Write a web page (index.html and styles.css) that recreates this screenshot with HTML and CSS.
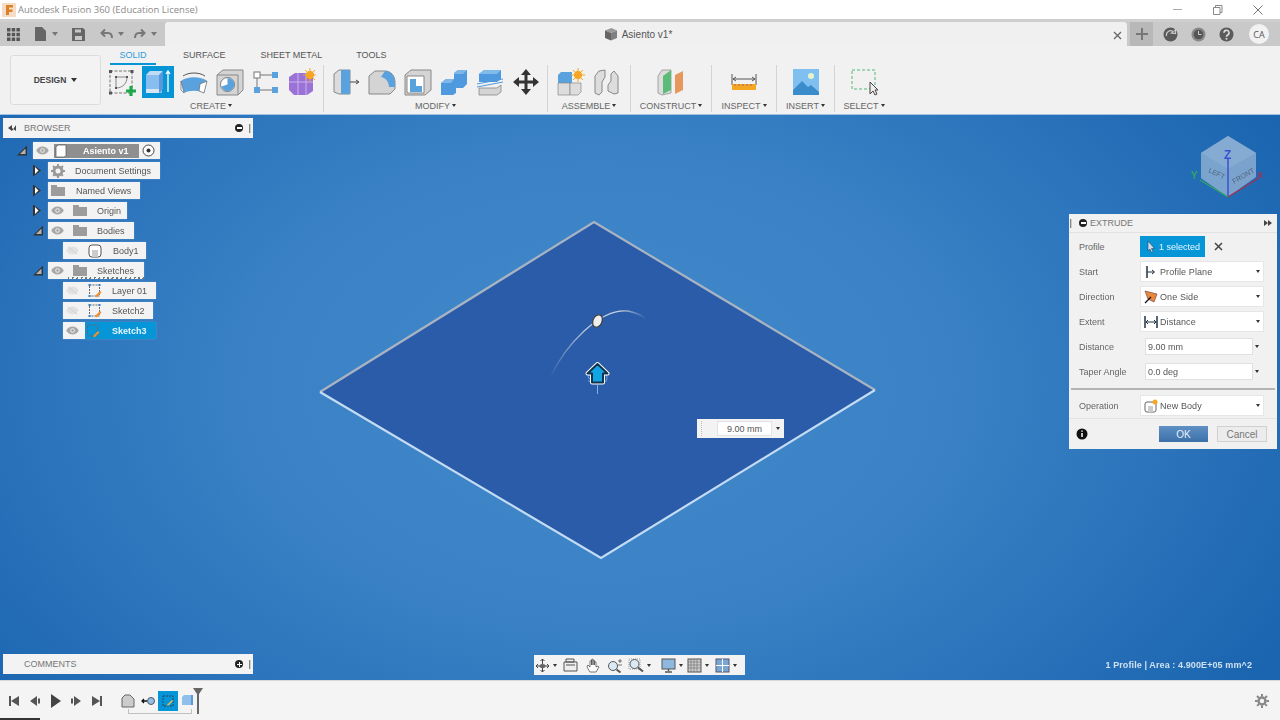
FILE: index.html
```html
<!DOCTYPE html>
<html lang="en">
<head>
<meta charset="utf-8">
<title>Autodesk Fusion 360 (Education License)</title>
<link rel="stylesheet" href="styles.css">
</head>
<body>
<div class="app">
  <header class="titlebar">
    <svg class="applogo" viewBox="0 0 14 14"><rect width="14" height="14" fill="#f6dcc4"/><path d="M4 2h7v2.500H7v2h3.500V9H7v3H4z" fill="#d9822b"/></svg>
    <span class="apptitle">Autodesk Fusion 360 (Education License)</span>
    <div class="winctl">
      <svg width="12" height="12" viewBox="0 0 12 12"><path d="M1 5.500h9" stroke="#aaa" fill="none"/></svg>
      <svg width="12" height="12" viewBox="0 0 12 12"><path d="M1.500 3.500h6.500v7H1.500zM3.500 3.500v-2h6.500v7H8" stroke="#888" fill="none"/></svg>
      <svg width="12" height="12" viewBox="0 0 12 12"><path d="M1.500 1.500l9 9M10.500 1.500l-9 9" stroke="#777" fill="none"/></svg>
    </div>
  </header>

  <nav class="tabbar">
    <div class="qat">
      <svg width="13" height="13" viewBox="0 0 13 13" fill="#555"><path d="M0 0h3.500v3.500H0zM4.700 0h3.500v3.500H4.700zM9.400 0h3.500v3.500H9.400zM0 4.700h3.500v3.500H0zM4.700 4.700h3.500v3.500H4.700zM9.400 4.700h3.500v3.500H9.400zM0 9.400h3.500v3.500H0zM4.700 9.400h3.500v3.500H4.700zM9.400 9.400h3.500v3.500H9.400z"/></svg>
      <span class="qat-pair file"><svg width="12" height="14" viewBox="0 0 12 14" fill="#666"><path d="M0 0h7l4 4v10H0z"/></svg><i class="caret"></i></span>
      <svg class="save" width="13" height="13" viewBox="0 0 13 13"><path fill="#666" d="M0 0h11l2 2v11H0z"/><path fill="#c8c8c8" d="M3 1.500h6v3H3zM3 8h7v4H3z"/></svg>
      <span class="qat-pair undo"><svg width="13" height="12" viewBox="0 0 13 12"><path d="M5 1.500L1.500 5 5 8.500M2 5h6c3 0 4 2 4 5" stroke="#777" stroke-width="2" fill="none"/></svg><i class="caret"></i></span>
      <span class="qat-pair redo"><svg width="13" height="12" viewBox="0 0 13 12"><path d="M8 1.500L11.500 5 8 8.500M11 5H6c-3 0-4 2-4 5" stroke="#777" stroke-width="2" fill="none"/></svg><i class="caret"></i></span>
    </div>
    <div class="doctab">
      <div class="doctab-title">
        <svg width="14" height="14" viewBox="0 0 14 14"><path d="M1 3.500L7.500 1l5.500 2.500-6 2.500z" fill="#9a9a9a"/><path d="M1 3.500L7 6v7.500l-6-2.500z" fill="#666"/><path d="M13 3.500L7 6v7.500l6-2.500z" fill="#808080"/></svg>
        <span>Asiento v1*</span>
      </div>
      <svg class="tabclose" width="9" height="9" viewBox="0 0 9 9"><path d="M1 1l7 7M8 1L1 8" stroke="#666" stroke-width="1.300"/></svg>
    </div>
    <div class="plus"><svg width="12" height="12" viewBox="0 0 12 12"><path d="M6 0v12M0 6h12" stroke="#777" stroke-width="2"/></svg></div>
    <div class="tabicons">
      <svg width="15" height="15" viewBox="0 0 15 15"><circle cx="7.500" cy="7.500" r="7" fill="#5a5a5a"/><path d="M3.500 9a4.200 4.200 0 0 1 6.700-4.300L8.500 6l4 .5V2.500L11.200 4" stroke="#c8c8c8" stroke-width="1.200" fill="none"/></svg>
      <svg width="15" height="15" viewBox="0 0 15 15"><circle cx="7.500" cy="7.500" r="7" fill="#888"/><circle cx="7.500" cy="7.500" r="4.800" fill="#555"/><path d="M7.500 4v3.500h3" stroke="#ccc" fill="none"/></svg>
      <svg width="15" height="15" viewBox="0 0 15 15"><circle cx="7.500" cy="7.500" r="7" fill="#5a5a5a"/><path d="M5 5.800a2.500 2.500 0 1 1 3.700 2.200c-.8.500-1.200.8-1.200 1.800" stroke="#ddd" stroke-width="1.600" fill="none"/><circle cx="7.500" cy="11.800" r="1" fill="#ddd"/></svg>
      <span class="avatar">CA</span>
    </div>
  </nav>

  <section class="ribbon">
    <button class="design">DESIGN<i class="caret dark"></i></button>
    <div class="ribbon-main">
      <div class="tabs">
        <span class="tab active">SOLID</span>
        <span class="tab surface">SURFACE</span>
        <span class="tab sheet">SHEET METAL</span>
        <span class="tab tools">TOOLS</span>
      </div>
      <div class="groups">
        <div class="group g-create">
          <div class="icons">
            <svg class="ic" viewBox="0 0 28 28"><rect x="2" y="3" width="22" height="22" fill="none" stroke="#777" stroke-dasharray="3 1.500"/><path d="M1 2h3v3H1zM22.500 2h3v3h-3zM1 23.500h3v3H1z" fill="#555"/><path d="M8 9h11c0 6-4 11-11 11z" fill="none" stroke="#888"/><path d="M7 8h2v2H7zM18 8h2v2h-2zM7 19h2v2H7z" fill="#555"/><path d="M18 23h10M23 18v10" stroke="#1ea84c" stroke-width="3.200"/></svg>
            <span class="active-ic"><svg class="ic" viewBox="0 0 28 28"><path d="M2 7l4-4h12v22H2z" fill="#88bdf0"/><path d="M6 3h13l-4 4H2z" fill="#bfdcf6"/><path d="M15 7l4-4v18l-4 4z" fill="#5a99d8"/><path d="M2 21h13v4H2z" fill="#d7e6f2"/><path d="M24 24V3M22 6l2-3 2 3" stroke="#fff" fill="none" stroke-width="1.300"/></svg></span>
            <svg class="ic" viewBox="0 0 28 28"><path d="M1 13c6-5 20-5 26 0l-3 12c-5-3-15-3-20 0z" fill="#5aa2de"/><path d="M1 13l3 12-3-3zM20 16l7-3-3 12-5-2z" fill="#fff" stroke="#666" stroke-width=".7"/><path d="M3 8c6-4 16-4 22 0" stroke="#555" fill="none"/></svg>
            <svg class="ic" viewBox="0 0 28 28"><path d="M1 7l6-5h20v20l-5 5H1z" fill="#d4d4d4" stroke="#888"/><path d="M1 7h21v20" fill="none" stroke="#888"/><circle cx="11.500" cy="16.500" r="7" fill="#fff" stroke="#777"/><path d="M11.500 10a6.500 6.500 0 1 1-6 8.500l6-2z" fill="#5aa2de"/></svg>
            <svg class="ic" viewBox="0 0 28 28"><rect x="2" y="4" width="6" height="6" fill="#fff" stroke="#777"/><rect x="20" y="4" width="6" height="6" fill="#5aa2de"/><rect x="2" y="19" width="6" height="6" fill="#5aa2de"/><rect x="20" y="19" width="6" height="6" fill="#5aa2de"/><path d="M8 7h12M8 22h12M5 10v9" stroke="#777"/></svg>
            <svg class="ic" viewBox="0 0 28 28"><path d="M1 9l6-4h13l5 5v13l-6 4H6l-5-5z" fill="#9b72d8"/><path d="M1 14h24M10 5v22M18 5v22" stroke="#c9b3ec"/><circle cx="22" cy="7" r="4" fill="#f5a623"/><path d="M22 0v14M15 7h14M17 2l10 10M27 2L17 12" stroke="#f5a623"/></svg>
          </div>
          <span class="glabel create-label">CREATE<i class="caret dark"></i></span>
        </div>
        <div class="group g-modify">
          <div class="icons">
            <svg class="ic" viewBox="0 0 28 28"><path d="M2 6l5-4h11v24H7l-5-2z" fill="#dcdcdc" stroke="#888"/><path d="M9 2h9v24H9z" fill="#5aa2de"/><path d="M18 14h8M24 12l3 2-3 2" stroke="#444" fill="none"/></svg>
            <svg class="ic" viewBox="0 0 28 28"><path d="M1 8l6-5h10c6 0 10 5 10 11v7l-5 5H1z" fill="#d4d4d4" stroke="#888"/><path d="M17 3c6 0 10 5 10 11v5h-6c0-5-3-9-8-10z" fill="#5aa2de"/></svg>
            <svg class="ic" viewBox="0 0 28 28"><path d="M1 7l6-5h20v20l-6 5H1z" fill="#d4d4d4" stroke="#888"/><path d="M3 8h17v17H3z" fill="#fff" stroke="#888"/><path d="M6 11h6v7h6v6H6z" fill="#5aa2de"/></svg>
            <svg class="ic" viewBox="0 0 28 28"><path d="M1 15l5-4h8V5l4-3h9v14l-4 4h-7v5l-3 2H1z" fill="#4f9ade"/><path d="M14 5l4-3h9l-4 4H14zM1 15l5-4h8l-3 4z" fill="#7fb8e8"/></svg>
            <svg class="ic" viewBox="0 0 28 28"><path d="M3 6l5-4h17v9l-4 3H3z" fill="#4f9ade"/><path d="M3 6l5-4h17l-4 4z" fill="#80bcea"/><path d="M1 16l26-5M1 19l26-5" stroke="#4f9ade"/><path d="M3 20h18l4-3v7l-4 3H3z" fill="#d4d4d4" stroke="#888" stroke-width=".8"/></svg>
            <svg class="ic" viewBox="0 0 28 28"><path d="M14 1l5 6h-3.500v5.500H21V9l6 5-6 5v-3.500h-5.500V21H19l-5 6-5-6h3.500v-5.500H7V19l-6-5 6-5v3.500h5.500V7H9z" fill="#333"/></svg>
          </div>
          <span class="glabel">MODIFY<i class="caret dark"></i></span>
        </div>
        <div class="group g-assemble">
          <div class="icons">
            <svg class="ic" viewBox="0 0 28 28"><path d="M1 7l3-3h11v11H1z" fill="#5aa2de"/><path d="M1 15h12v12H1z" fill="#ddd" stroke="#888" stroke-width=".7"/><path d="M13 15h11v9l-3 3h-8z" fill="#ddd" stroke="#888" stroke-width=".7"/><circle cx="21" cy="7" r="4" fill="#f5a623"/><path d="M21 0v14M14 7h14M16 2l10 10M26 2L16 12" stroke="#f5a623"/></svg>
            <svg class="ic" viewBox="0 0 28 28"><path d="M2 25V8l4-5 6-1v7l-3 5v10l-3 3z" fill="#ddd" stroke="#888"/><path d="M25 25V8l-4-5-3 3v7l-3 4v6l6 3z" fill="#ddd" stroke="#888"/></svg>
          </div>
          <span class="glabel">ASSEMBLE<i class="caret dark"></i></span>
        </div>
        <div class="group g-construct">
          <div class="icons">
            <svg class="ic" viewBox="0 0 28 28"><path d="M1 8l4-6h9v23l-9 2-4-2z" fill="#ddd" stroke="#888" stroke-width=".7"/><path d="M6 8l8-6v20l-8 4z" fill="#5dbb78"/><path d="M18 7l8-4v19l-8 4z" fill="#e8975c"/></svg>
          </div>
          <span class="glabel">CONSTRUCT<i class="caret dark"></i></span>
        </div>
        <div class="group g-inspect">
          <div class="icons">
            <svg class="ic" viewBox="0 0 28 28"><path d="M2 6v11M26 6v11M3 11h22M6 9l-3 2 3 2M22 9l3 2-3 2" stroke="#555" fill="none"/><rect x="2" y="16" width="24" height="6" fill="#f5a623"/><path d="M5 16v2M9 16v2M13 16v2M17 16v2M21 16v2" stroke="#a66"/></svg>
          </div>
          <span class="glabel">INSPECT<i class="caret dark"></i></span>
        </div>
        <div class="group g-insert">
          <div class="icons">
            <svg class="ic" viewBox="0 0 28 28"><rect x="1" y="1" width="26" height="26" fill="#7fc0f0"/><circle cx="19" cy="8" r="3" fill="#e8f4c8"/><path d="M1 22l9-9 6 6 3-2 8 7v3H1z" fill="#3a8ccb"/></svg>
          </div>
          <span class="glabel">INSERT<i class="caret dark"></i></span>
        </div>
        <div class="group g-select">
          <div class="icons">
            <svg class="ic" viewBox="0 0 28 28"><rect x="2" y="2" width="23" height="19" fill="none" stroke="#55b878" stroke-dasharray="3 2"/><path d="M20 14v12l3-3 2 4 2-1-2-4h3z" fill="#eee" stroke="#444"/></svg>
          </div>
          <span class="glabel">SELECT<i class="caret dark"></i></span>
        </div>
      </div>
    </div>
  </section>

  <main class="viewport">
    <svg class="scene" width="1280" height="566" viewBox="0 114 1280 566">
      <defs>
        <linearGradient id="arcfade" gradientUnits="userSpaceOnUse" x1="550" y1="378" x2="645" y2="318">
          <stop offset="0" stop-color="#c9d3de" stop-opacity="0"/>
          <stop offset=".5" stop-color="#c9d3de" stop-opacity=".9"/>
          <stop offset=".85" stop-color="#c9d3de"/>
          <stop offset="1" stop-color="#c9d3de" stop-opacity=".1"/>
        </linearGradient>
      </defs>
      <polygon points="594,222 875,390 601,558 320,392" fill="#2b5ca9"/>
      <path d="M320 392L594 222 875 390" fill="none" stroke="#a9b4c2" stroke-width="2.200"/>
      <path d="M320 392L601 558 875 390" fill="none" stroke="#c4dcf3" stroke-width="2.200"/>
      <path d="M550 378C565 345 600 308 628 311Q638 313 645 318" fill="none" stroke="url(#arcfade)" stroke-width="1.300"/>
      <ellipse cx="597.500" cy="321" rx="4.500" ry="6.500" transform="rotate(25 597.500 321)" fill="#eee" stroke="#444" stroke-width="1.300"/>
      <text class="ghost" x="597.500" y="382" text-anchor="middle">9.00</text>
      <path d="M597.500 385v9" stroke="#7fb4e8"/>
      <path d="M597.500 364l10 9.500h-4.500v9h-11v-9h-4.500z" fill="none" stroke="#fff" stroke-width="4" stroke-linejoin="round"/>
      <path d="M597.500 364l10 9.500h-4.500v9h-11v-9h-4.500z" fill="#12a5e3" stroke="#14324d" stroke-width="2" stroke-linejoin="round"/>
    </svg>

    <svg class="viewcube" width="90" height="80" viewBox="0 0 90 80">
      <path d="M44 10l28 17v24L44 71 17 52V27z" fill="#7aa2cc"/>
      <path d="M44 10l28 17-28 16-27-16z" fill="#86abd2"/>
      <path d="M17 27l27 16v28L17 52z" fill="#7aa3cd"/>
      <path d="M44 33v38" stroke="#3b4fd0" stroke-width="1.500"/>
      <path d="M44 71L16 54" stroke="#2fa860" stroke-width="1.200"/>
      <path d="M44 71l31-19" stroke="#a83050" stroke-width="1.200"/>
      <text x="40" y="33" class="cube-z">Z</text>
      <text x="7" y="53" class="cube-y">Y</text>
      <text x="73" y="52" class="cube-x">X</text>
      <text x="24" y="46" class="cube-t" transform="rotate(25 24 46)">LEFT</text>
      <text x="50" y="58" class="cube-t" transform="rotate(-30 50 58)">FRONT</text>
    </svg>

    <div class="panel browser-head">
      <i class="dbl left"></i><span class="ptitle">BROWSER</span>
      <span class="pctl"><i class="minus"></i><i class="grip"></i></span>
    </div>

    <div class="tree">
      <div class="row lvl0">
        <i class="tw open"></i>
        <div class="node root">
          <svg class="eye" viewBox="0 0 14 10"><use href="#eye"/></svg>
          <span class="rootlabel"><svg width="14" height="14" viewBox="0 0 14 14"><path d="M2 3l2-2h8v11l-2 1H2z" fill="#fff" stroke="#555" stroke-width=".7"/></svg><b>Asiento v1</b></span>
          <svg class="radio" width="13" height="13" viewBox="0 0 13 13"><circle cx="6.500" cy="6.500" r="5.500" fill="#fff" stroke="#444"/><circle cx="6.500" cy="6.500" r="2" fill="#333"/></svg>
        </div>
      </div>
      <div class="row lvl1">
        <i class="tw closed"></i>
        <div class="node docset">
          <svg class="gear" width="14" height="14" viewBox="0 0 14 14"><circle cx="7" cy="7" r="4" fill="none" stroke="#999" stroke-width="3"/><path d="M7 0v14M0 7h14M2 2l10 10M12 2L2 12" stroke="#999" stroke-width="2" stroke-dasharray="2.500 9 2.500"/></svg>
          <span class="lbl">Document Settings</span>
        </div>
      </div>
      <div class="row lvl1">
        <i class="tw closed"></i>
        <div class="node named">
          <svg class="folder" viewBox="0 0 14 11"><use href="#folder"/></svg>
          <span class="lbl">Named Views</span>
        </div>
      </div>
      <div class="row lvl1">
        <i class="tw closed"></i>
        <div class="node origin">
          <svg class="eye" viewBox="0 0 14 10"><use href="#eye"/></svg>
          <svg class="folder" viewBox="0 0 14 11"><use href="#folder"/></svg>
          <span class="lbl">Origin</span>
        </div>
      </div>
      <div class="row lvl1">
        <i class="tw open"></i>
        <div class="node bodies">
          <svg class="eye" viewBox="0 0 14 10"><use href="#eye"/></svg>
          <svg class="folder" viewBox="0 0 14 11"><use href="#folder"/></svg>
          <span class="lbl">Bodies</span>
        </div>
      </div>
      <div class="row lvl2">
        <div class="node body1">
          <svg class="eye off" viewBox="0 0 14 10"><use href="#eyeoff"/></svg>
          <svg class="leaf" viewBox="0 0 14 14"><rect x="1" y="1" width="12" height="12" rx="3" fill="#fff" stroke="#555"/><rect x="4" y="6" width="6" height="7" fill="#ccc"/></svg>
          <span class="lbl">Body1</span>
        </div>
      </div>
      <div class="row lvl1">
        <i class="tw open"></i>
        <div class="node sketches">
          <svg class="eye" viewBox="0 0 14 10"><use href="#eye"/></svg>
          <svg class="folder" viewBox="0 0 14 11"><use href="#folder"/></svg>
          <span class="lbl">Sketches</span>
        </div>
      </div>
      <div class="row lvl2">
        <div class="node layer">
          <svg class="eye off" viewBox="0 0 14 10"><use href="#eyeoff"/></svg>
          <svg class="leaf" viewBox="0 0 14 14"><use href="#sk"/></svg>
          <span class="lbl">Layer 01</span>
        </div>
      </div>
      <div class="row lvl2">
        <div class="node sk2">
          <svg class="eye off" viewBox="0 0 14 10"><use href="#eyeoff"/></svg>
          <svg class="leaf" viewBox="0 0 14 14"><use href="#sk"/></svg>
          <span class="lbl">Sketch2</span>
        </div>
      </div>
      <div class="row lvl2">
        <div class="node sk3">
          <svg class="eye" viewBox="0 0 14 10"><use href="#eye"/></svg>
          <span class="selected"><svg class="leaf" viewBox="0 0 14 14"><use href="#sk"/></svg><b>Sketch3</b></span>
        </div>
      </div>
    </div>

    <div class="dimbox">
      <i class="dimgrip"></i>
      <span class="diminput">9.00 mm</span>
      <i class="caret dark"></i>
    </div>

    <aside class="extrude">
      <div class="ex-head">
        <i class="grip"></i><i class="minus"></i><span class="ptitle">EXTRUDE</span><i class="dbl right"></i>
      </div>
      <div class="ex-body">
        <div class="ex-row"><label>Profile</label>
          <div class="sel1"><svg width="8" height="12" viewBox="0 0 8 12"><path d="M1 0v10l2-2 1.500 3.500 1.500-.7L4.500 7.500H7.500z" fill="#cde" stroke="#234" stroke-width=".5"/></svg><span>1 selected</span></div>
          <svg class="clear" width="9" height="9" viewBox="0 0 9 9"><path d="M1 1l7 7M8 1L1 8" stroke="#444" stroke-width="1.500"/></svg>
        </div>
        <div class="ex-row"><label>Start</label>
          <div class="combo"><svg width="14" height="14" viewBox="0 0 14 14"><path d="M3 1v12" stroke="#234" stroke-width="1.500"/><path d="M3 7h7M8 5l2.500 2L8 9" stroke="#234" fill="none"/></svg><span>Profile Plane</span><i class="caret dark"></i></div>
        </div>
        <div class="ex-row"><label>Direction</label>
          <div class="combo"><svg width="14" height="14" viewBox="0 0 14 14"><path d="M1 1l12 3-3 8-6-3z" fill="#e8883c" stroke="#633" stroke-width=".6"/><path d="M1 13l6-6" stroke="#111" stroke-width="1.300"/></svg><span>One Side</span><i class="caret dark"></i></div>
        </div>
        <div class="ex-row"><label>Extent</label>
          <div class="combo"><svg width="14" height="14" viewBox="0 0 14 14"><path d="M1 1v12M13 1v12" stroke="#234" stroke-width="1.500"/><path d="M2 7h10M4 5L2 7l2 2M10 5l2 2-2 2" stroke="#234" fill="none"/></svg><span>Distance</span><i class="caret dark"></i></div>
        </div>
        <div class="ex-row"><label>Distance</label>
          <div class="input">9.00 mm</div><i class="caret dark"></i>
        </div>
        <div class="ex-row"><label>Taper Angle</label>
          <div class="input">0.0 deg</div><i class="caret dark"></i>
        </div>
        <hr class="ex-sep">
        <div class="ex-row"><label>Operation</label>
          <div class="combo"><svg width="14" height="14" viewBox="0 0 14 14"><rect x="1" y="3" width="11" height="10" rx="2" fill="#fff" stroke="#666"/><rect x="4" y="7" width="5" height="6" fill="#ccc"/><circle cx="11" cy="3" r="2.500" fill="#f5a623"/></svg><span>New Body</span><i class="caret dark"></i></div>
        </div>
      </div>
      <div class="ex-foot">
        <svg class="info" width="12" height="12" viewBox="0 0 12 12"><circle cx="6" cy="6" r="5.500" fill="#111"/><path d="M6 5v4M6 2.500v1.300" stroke="#fff" stroke-width="1.500"/></svg>
        <button class="ok">OK</button>
        <button class="cancel">Cancel</button>
      </div>
    </aside>

    <div class="panel comments-head">
      <span class="ptitle">COMMENTS</span>
      <span class="pctl"><i class="plusdot"></i><i class="grip"></i></span>
    </div>

    <div class="navbar">
      <span class="nv w"><svg width="15" height="15" viewBox="0 0 15 15"><path d="M7.500 1v13M1 8h13M5.500 3l2-2 2 2M5.500 12l2 2 2-2M3 6L1 8l2 2M12 6l2 2-2 2" stroke="#444" fill="none"/><ellipse cx="7.500" cy="8" rx="3" ry="2" fill="#666"/></svg><i class="caret dark"></i></span>
      <span class="nv"><svg width="15" height="14" viewBox="0 0 15 14"><path d="M1 4h13v9H1zM3 1h8v3H3z" fill="#eee" stroke="#555"/><path d="M3 7h9" stroke="#555"/></svg></span>
      <span class="nv hand"><svg width="15" height="15" viewBox="0 0 15 15"><path d="M4 14c-2-3-3-5-3-6l1-1 2 2V3l1.500-.5V7V1.500L7 1v6V2l1.500.5V7 3.500L10 4v5l2-1 1 1-3 5z" fill="#fff" stroke="#555" stroke-width=".8"/></svg></span>
      <span class="nv"><svg width="15" height="15" viewBox="0 0 15 15"><circle cx="6" cy="8" r="4.500" fill="#dbe9f5" stroke="#555"/><path d="M9.500 11.500l4 3" stroke="#555" stroke-width="2"/><path d="M11 3h4M13 1v4M11 7h4" stroke="#555" stroke-width=".8"/></svg></span>
      <span class="nv w"><svg width="16" height="15" viewBox="0 0 16 15"><rect x="1" y="1" width="11" height="10" fill="none" stroke="#999" stroke-dasharray="1 1"/><circle cx="6.500" cy="6" r="4.500" fill="#dbe9f5" stroke="#555"/><path d="M10 9.500l5 4" stroke="#555" stroke-width="2"/></svg><i class="caret dark"></i></span>
      <span class="nv w gap"><svg width="15" height="15" viewBox="0 0 15 15"><rect x="1" y="1" width="13" height="10" fill="#8fb8de" stroke="#555"/><path d="M7.500 11v2M4 14h7" stroke="#555" stroke-width="1.500"/></svg><i class="caret dark"></i></span>
      <span class="nv w tight"><svg width="15" height="15" viewBox="0 0 15 15"><rect x="1" y="1" width="13" height="13" fill="#ccc" stroke="#555"/><path d="M4 1v13M7 1v13M10 1v13M1 4h13M1 7h13M1 10h13" stroke="#777" stroke-width=".7"/></svg><i class="caret dark"></i></span>
      <span class="nv w"><svg width="15" height="15" viewBox="0 0 15 15"><rect x="1" y="1" width="13" height="13" fill="#7aa7d2" stroke="#557"/><path d="M7.500 1v13M1 7.500h13" stroke="#fff"/></svg><i class="caret dark"></i></span>
    </div>

    <div class="status">1 Profile | Area : 4.900E+05 mm^2</div>
  </main>

  <footer class="timeline">
    <div class="controls">
      <svg width="12" height="12" viewBox="0 0 12 12"><path d="M1 1h2v10H1zM11 1v10L3 6z" fill="#555"/></svg>
      <svg width="12" height="12" viewBox="0 0 12 12"><path d="M8 1v10L1 6zM9 3.500h2v5H9z" fill="#555"/></svg>
      <svg width="12" height="14" viewBox="0 0 12 14"><path d="M1 0v14l10-7z" fill="#444"/></svg>
      <svg width="12" height="12" viewBox="0 0 12 12"><path d="M4 1v10l7-5zM1 3.500h2v5H1z" fill="#555"/></svg>
      <svg width="12" height="12" viewBox="0 0 12 12"><path d="M1 1v10l8-5zM9 1h2v10H9z" fill="#555"/></svg>
    </div>
    <div class="tl-items">
      <svg width="14" height="14" viewBox="0 0 14 14"><path d="M1 4l3-3h5l4 4v8H1z" fill="#ccc" stroke="#666"/></svg>
      <svg class="tl-joint" width="14" height="10" viewBox="0 0 14 10"><circle cx="10" cy="5" r="3.500" fill="#8fc0ec" stroke="#555"/><path d="M6 5H1M3 3L1 5l2 2" stroke="#111" fill="none" stroke-width="1.300"/></svg>
      <span class="tl-active"><svg width="14" height="14" viewBox="0 0 14 14"><path d="M2 2h10v10H2z" fill="none" stroke="#246" stroke-dasharray="2 1"/><path d="M6 11l5-5 1 1-5 5z" fill="#f0c040"/></svg></span>
      <svg width="13" height="13" viewBox="0 0 13 13"><path d="M1 3l2-2h8v10H1z" fill="#8fc0ec"/><path d="M10 1h2v10h-2z" fill="#5a9ad8"/></svg>
      <svg class="marker" width="10" height="26" viewBox="0 0 10 26"><path d="M0 0h10L6 6v20H4V6z" fill="#666"/></svg>
      <i class="tl-bracket"></i>
    </div>
    <svg class="settings" width="14" height="14" viewBox="0 0 14 14"><circle cx="7" cy="7" r="3.500" fill="none" stroke="#888" stroke-width="2.500"/><path d="M7 0v14M0 7h14M2 2l10 10M12 2L2 12" stroke="#888" stroke-width="2" stroke-dasharray="2.500 9 2.500"/></svg>
    <i class="taskline"></i>
  </footer>
</div>

<svg class="defs" width="0" height="0">
  <defs>
    <g id="eye"><path d="M0 5c3-6 11-6 14 0-3 6-11 6-14 0z" fill="#a8a8a8"/><circle cx="7" cy="5" r="2.500" fill="#ececec"/><circle cx="7" cy="5" r="1.300" fill="#999"/></g>
    <g id="eyeoff"><path d="M0 5c3-6 11-6 14 0-3 6-11 6-14 0z" fill="#e2e2e2"/><path d="M2 1l10 8" stroke="#ccc"/></g>
    <g id="folder"><path d="M0 0h6v2h8v9H0z" fill="#9c9c9c"/></g>
    <g id="sk"><rect x="1.500" y="1" width="10" height="11" fill="none" stroke="#666" stroke-dasharray="2 1"/><rect x="0.500" y="0" width="2" height="2" fill="#2f80d0"/><rect x="10.500" y="0" width="2" height="2" fill="#2f80d0"/><rect x="0.500" y="11" width="2" height="2" fill="#2f80d0"/><path d="M7 12l5-5 1.500 1.500-5 5z" fill="#f09030"/></g>
  </defs>
</svg>
</body>
</html>
```

FILE: styles.css
```css
* { box-sizing: border-box; }
html, body { margin: 0; padding: 0; }
body { width: 1280px; height: 720px; overflow: hidden; font-family: "Liberation Sans", Arial, sans-serif; color: #555; background: #fff; }
i { display: block; font-style: normal; }
b { font-weight: bold; }
button { font-family: inherit; }
.defs { position: absolute; }

.app { display: flex; flex-direction: column; width: 1280px; height: 720px; filter: blur(.35px); }

.caret { width: 0; height: 0; border-left: 3px solid transparent; border-right: 3px solid transparent; border-top: 4px solid #777; flex: none; }
.caret.dark { border-top-color: #333; }

/* title */
.titlebar { height: 19px; flex: none; display: flex; align-items: center; padding-left: 2px; background: #fff; }
.applogo { width: 14px; height: 14px; flex: none; }
.apptitle { font: 9.500px "Open Sans", sans-serif; color: #8a8a8a; margin-left: 2px; }
.winctl { margin-left: auto; display: flex; gap: 28px; padding-right: 16px; }

/* tab bar */
.tabbar { height: 27px; flex: none; display: flex; background: #c9c9c9; border-top: 3px solid #cfcfcf; }
.qat { width: 165px; display: flex; align-items: center; padding-left: 7px; flex: none; }
.qat-pair { display: flex; align-items: center; gap: 5px; }
.file { margin-left: 15px; }
.save { margin-left: 14px; }
.undo { margin-left: 15px; }
.redo { margin-left: 9px; }
.doctab { width: 962px; background: #f0f0f0; display: flex; align-items: center; justify-content: center; position: relative; border-radius: 3px 3px 0 0; padding-right: 16px; }
.doctab-title { display: flex; align-items: center; gap: 4px; font-size: 10px; color: #555; }
.tabclose { position: absolute; right: 5px; top: 9px; }
.plus { width: 23px; background: #b8b8b8; display: flex; align-items: center; justify-content: center; margin-left: 3px; }
.tabicons { flex: 1; display: flex; align-items: center; gap: 13px; padding-left: 10px; }
.avatar { width: 20px; height: 20px; border-radius: 50%; background: #f2f2f2; font: 9px "Open Sans", sans-serif; color: #555; display: flex; align-items: center; justify-content: center; margin-left: 2px; }

/* ribbon */
.ribbon { height: 68px; flex: none; background: #f1f1f1; display: flex; position: relative; }
.design { width: 91px; height: 50px; margin: 9px 0 0 10px; border: 1px solid #dcdcdc; border-radius: 3px; background: #f3f3f3; font-size: 8.500px; font-weight: bold; color: #444; display: flex; align-items: center; justify-content: center; gap: 5px; padding: 0; flex: none; }
.ribbon-main { margin-left: 8px; flex: 1; display: flex; flex-direction: column; }
.tabs { height: 19px; display: flex; align-items: flex-end; font-size: 9px; color: #555; }
.tab { line-height: 13px; }
.tab.active { width: 46px; text-align: center; color: #2f9bd8; border-bottom: 2px solid #0696d7; height: 19px; padding-top: 3px; margin-left: 1px; }
.surface { margin-left: 27px; position: relative; top: -3px; }
.sheet { margin-left: 35px; position: relative; top: -3px; }
.tools { margin-left: 34px; position: relative; top: -3px; }
.groups { display: flex; height: 49px; }
.group { display: flex; flex-direction: column; align-items: center; border-right: 1px solid #d4d4d4; height: 47px; }
.g-create { width: 215px; }
.g-modify { width: 224px; }
.g-assemble { width: 83px; }
.g-construct { width: 81px; }
.g-inspect { width: 65px; }
.g-insert { width: 58px; }
.g-select { width: 58px; border-right: 0; }
.icons { height: 34px; display: flex; align-items: center; justify-content: center; }
.g-create .icons { gap: 8px; margin-left: -8px; }
.g-modify .icons { gap: 8px; }
.g-assemble .icons { gap: 8px; }
.ic { width: 28px; height: 28px; display: block; flex: none; }
.active-ic { width: 32px; height: 32px; background: #0696d7; display: flex; align-items: center; justify-content: center; margin: 0 -2px; }
.glabel { font-size: 9px; color: #666; display: flex; align-items: center; gap: 2px; height: 13px; }
.create-label { margin-left: -10px; }
.glabel .caret { border-left-width: 2.500px; border-right-width: 2.500px; border-top-width: 3px; }

/* viewport */
.viewport { flex: 1; position: relative; overflow: hidden; background: radial-gradient(ellipse 780px 520px at 600px 270px, #4289cb 0%, #3a82c5 45%, #2a72ba 75%, #1b65b0 100%); border-top: 1px solid #9fc3e4; }
.scene { position: absolute; left: 0; top: -1px; }
.ghost { font: 10.500px "Liberation Sans", sans-serif; fill: #6ba3e0; }
.viewcube { position: absolute; left: 1184px; top: 11px; }
.cube-z { font: bold 12px "Liberation Sans", sans-serif; fill: #3b4fd0; }
.cube-y { font: bold 10px "Liberation Sans", sans-serif; fill: #2fa860; }
.cube-x { font: bold 9px "Liberation Sans", sans-serif; fill: #a83050; }
.cube-t { font: 7px "Liberation Sans", sans-serif; fill: #50667e; }

.panel { position: absolute; left: 3px; width: 250px; display: flex; align-items: center; background: #f3f3f3; }
.browser-head { top: 3px; height: 20px; padding-left: 5px; }
.comments-head { top: 539px; height: 20px; padding-left: 21px; }
.ptitle { font-size: 9px; color: #777; }
.browser-head .ptitle { margin-left: 8px; }
.pctl { margin-left: auto; display: flex; align-items: center; gap: 6px; padding-right: 2px; }
.minus { width: 8px; height: 8px; border-radius: 50%; background: #222; position: relative; }
.minus::after { content: ""; position: absolute; left: 1.500px; right: 1.500px; top: 3px; height: 2px; background: #fff; }
.plusdot { width: 8px; height: 8px; border-radius: 50%; background-color: #222; background-image: linear-gradient(#fff, #fff), linear-gradient(#fff, #fff); background-size: 5px 1px, 1px 5px; background-position: center; background-repeat: no-repeat; }
.grip { width: 2px; height: 9px; border-left: 1px solid #888; border-right: 1px solid #ccc; }
.dbl { width: 8px; height: 6px; background: linear-gradient(#444, #444); }
.dbl.left { clip-path: polygon(0 50%, 50% 0, 50% 100%, 100% 0, 100% 100%, 50% 50%, 50% 100%); }
.dbl.right { clip-path: polygon(0 0, 50% 50%, 50% 0, 100% 50%, 50% 100%, 50% 50%, 0 100%); }

.tree { position: absolute; left: 0; top: 27px; display: flex; flex-direction: column; gap: 3px; }
.row { height: 17px; display: flex; align-items: center; }
.lvl0 { padding-left: 17px; }
.lvl1 { padding-left: 33px; }
.lvl2 { padding-left: 63px; }
.tw { flex: none; position: relative; background: #333; }
.tw::after { content: ""; position: absolute; }
.tw.open { width: 10px; height: 10px; clip-path: polygon(100% 0, 100% 100%, 0 100%); }
.tw.open::after { inset: 3px 1.500px 1.500px 3px; background: #b5b5b5; clip-path: polygon(100% 0, 100% 100%, 0 100%); }
.lvl0 .tw.open { margin-right: 6px; }
.lvl1 .tw.open { margin-right: 5px; }
.tw.closed { width: 8px; height: 12px; margin-right: 7px; clip-path: polygon(0 0, 100% 50%, 0 100%); }
.tw.closed::after { inset: 2.500px 2.500px 2.500px 2px; background: #fff; clip-path: polygon(0 0, 100% 50%, 0 100%); }
.node { height: 17px; background: #f3f3f3; display: flex; align-items: center; font-size: 9px; color: #555; box-shadow: 0 0 2px rgba(120, 170, 220, .6); padding-left: 3px; }
.root { width: 127px; }
.docset { width: 112px; }
.named { width: 92px; }
.origin { width: 79px; }
.bodies { width: 86px; }
.body1 { width: 83px; }
.sketches { width: 96px; background-image: repeating-linear-gradient(115deg, #777 0 1.500px, transparent 1.500px 4px); background-size: calc(100% - 20px) 2px; background-position: right bottom; background-repeat: no-repeat; }
.layer { width: 93px; }
.sk2 { width: 90px; }
.sk3 { width: 93px; }
.eye { width: 13px; height: 9px; flex: none; }
.folder { width: 14px; height: 11px; margin-left: 9px; flex: none; }
.named .folder { margin-left: 0; }
.leaf { width: 14px; height: 14px; margin-left: 9px; flex: none; }
.lbl { white-space: nowrap; margin-left: 10px; }
.named .lbl { margin-left: 11px; }
.body1 .lbl { margin-left: 11px; }
.layer .lbl, .sk2 .lbl { margin-left: 10px; }
.rootlabel { width: 85px; height: 14px; background: #8f8f8f; display: flex; align-items: center; margin-left: 5px; color: #fff; font-size: 9px; }
.rootlabel b { margin-left: 15px; }
.radio { margin-left: 3px; }
.selected { flex: 1; align-self: stretch; background: #0696d7; color: #e6f5ff; display: flex; align-items: center; margin-left: 6px; }
.selected .leaf { margin-left: 1px; }
.selected b { margin-left: 12px; font-size: 9px; }

.dimbox { position: absolute; left: 697px; top: 304px; width: 87px; height: 19px; background: #f3f3f3; display: flex; align-items: center; padding-left: 4px; }
.dimgrip { width: 2px; height: 15px; border-left: 1px dotted #bbb; }
.diminput { width: 55px; height: 15px; margin-left: 14px; background: #fff; border: 1px solid #e3e3e3; font-size: 9px; color: #555; display: flex; align-items: center; justify-content: center; }
.dimbox .caret { margin-left: 4px; border-left-width: 2.500px; border-right-width: 2.500px; border-top-width: 3px; }

.extrude { position: absolute; left: 1069px; top: 99px; width: 208px; height: 235px; background: #f1f1f1; display: flex; flex-direction: column; }
.ex-head { height: 19px; flex: none; display: flex; align-items: center; gap: 3px; padding: 0 5px 0 1px; border-bottom: 1px solid #e2e2e2; }
.ex-head .ptitle { flex: 1; }
.ex-head .minus { margin-left: 4px; }
.ex-body { flex: 1; display: flex; flex-direction: column; padding-top: 1px; }
.ex-row { height: 25px; flex: none; display: flex; align-items: center; font-size: 9px; color: #666; }
.ex-row label { width: 71px; padding-left: 10px; flex: none; }
.sel1 { width: 65px; height: 21px; background: #0696d7; color: #e6f5ff; display: flex; align-items: center; gap: 4px; padding-left: 7px; }
.clear { margin-left: 9px; }
.combo { width: 124px; height: 21px; background: #fff; border: 1px solid #e6e6e6; display: flex; align-items: center; padding: 0 3px; gap: 2px; font-size: 9px; color: #555; }
.combo span { flex: 1; letter-spacing: .1px; }
.ex-row .caret { border-left-width: 2.500px; border-right-width: 2.500px; border-top-width: 3px; }
.input { width: 108px; height: 17px; margin-left: 5px; background: #fff; border: 1px solid #e0e0e0; display: flex; align-items: center; padding-left: 2px; color: #555; }
.ex-row > .caret { margin-left: 2px; }
.ex-sep { margin: 4px 1px 3px; width: 204px; border: 0; height: 2px; background: #b4b4b4; align-self: center; }
.ex-foot { height: 31px; flex: none; display: flex; align-items: center; border-top: 1px solid #e2e2e2; padding-left: 7px; }
.ok { width: 49px; height: 16px; margin-left: 71px; border: 0; background: linear-gradient(#5f90c4, #3b70a8); color: #e8f0f8; font-size: 10px; padding: 0; }
.cancel { width: 50px; height: 16px; margin-left: 9px; border: 1px solid #d0d0d0; background: #ececec; color: #777; font-size: 10px; padding: 0; }

.navbar { position: absolute; left: 534px; top: 540px; width: 211px; height: 20px; background: #f3f3f3; display: flex; align-items: center; padding-left: 1px; gap: 6px; }
.nv { display: flex; align-items: center; gap: 3px; }
.nv .caret { border-left-width: 2.500px; border-right-width: 2.500px; border-top-width: 3px; }
.nv.hand { margin-left: 2px; }
.nv.gap { margin-left: 4px; }
.nv.tight { margin-left: -2px; }
.status { position: absolute; right: 28px; top: 545px; font-size: 9px; font-weight: bold; color: #cfe0f0; letter-spacing: .1px; }

/* timeline */
.timeline { height: 40px; flex: none; background: #f4f4f4; display: flex; align-items: center; position: relative; border-top: 1px solid #d9d9d9; }
.controls { display: flex; align-items: center; gap: 8.750px; padding-left: 8px; }
.tl-items { display: flex; align-items: center; margin-left: 18px; gap: 3px; position: relative; }
.tl-joint { margin-left: 3px; }
.tl-active { width: 20px; height: 20px; background: #0696d7; display: flex; align-items: center; justify-content: center; }
.marker { margin-left: -4px; }
.tl-bracket { position: absolute; left: 7px; right: 11px; bottom: 0; height: 5px; border: 1px solid #c0c0c0; border-top: 0; }
.settings { margin-left: auto; margin-right: 11px; }
.taskline { position: absolute; left: 0; bottom: 0; width: 40px; height: 2px; background: #333; }
```
